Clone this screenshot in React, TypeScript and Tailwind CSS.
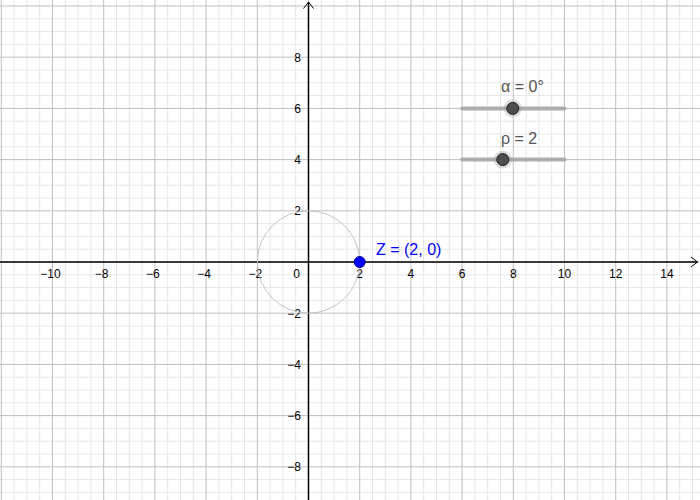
const W = 700;
const H = 500;
const OX = 308.5;
const OY = 262;
const U = 25.6;

const px = (x: number) => OX + x * U;
const py = (y: number) => OY - y * U;

const range = (a: number, b: number, s: number) => {
  const out: number[] = [];
  for (let v = a; v <= b + 1e-9; v += s) out.push(Math.round(v * 100) / 100);
  return out;
};

const xs = range(-12.5, 15.5, 0.5);
const ys = range(-10, 11, 0.5);
const fmt = (n: number) => (n < 0 ? "\u2212" + Math.abs(n) : String(n));

function Slider({ y, knob, label }: { y: number; knob: number; label: string }) {
  return (
    <g>
      <line x1={px(6)} y1={py(y)} x2={px(10)} y2={py(y)} stroke="#a8a8a8" strokeWidth={4} strokeLinecap="round" opacity={0.9} />
      <circle cx={px(knob)} cy={py(y)} r={9} fill="#9a9a9a" opacity={0.35} />
      <circle cx={px(knob)} cy={py(y)} r={6} fill="#4d4d4d" stroke="#222" strokeWidth={1} />
      <text x={501} y={py(y) - 16} fontSize={16} fill="#555555">{label}</text>
    </g>
  );
}

export default function App() {
  return (
    <div className="w-[700px] h-[500px] bg-white overflow-hidden" style={{ fontFamily: "'Liberation Sans', Arial, sans-serif" }}>
      <svg width={W} height={H} viewBox={`0 0 ${W} ${H}`} className="block">
        {/* minor grid */}
        {xs.filter((v) => v % 2 !== 0).map((v) => (
          <line key={"mx" + v} x1={px(v)} y1={0} x2={px(v)} y2={H} stroke="#e6e6e6" strokeWidth={1} />
        ))}
        {ys.filter((v) => v % 2 !== 0).map((v) => (
          <line key={"my" + v} x1={0} y1={py(v)} x2={W} y2={py(v)} stroke="#e6e6e6" strokeWidth={1} />
        ))}
        {/* major grid */}
        {xs.filter((v) => v % 2 === 0).map((v) => (
          <line key={"Mx" + v} x1={px(v)} y1={0} x2={px(v)} y2={H} stroke="#c0c0c0" strokeWidth={1} />
        ))}
        {ys.filter((v) => v % 2 === 0).map((v) => (
          <line key={"My" + v} x1={0} y1={py(v)} x2={W} y2={py(v)} stroke="#c0c0c0" strokeWidth={1} />
        ))}

        {/* axes */}
        <line x1={0} y1={OY} x2={697.5} y2={OY} stroke="#000" strokeWidth={1.5} />
        <polyline points={`691,${OY - 5} 697.5,${OY} 691,${OY + 5}`} fill="none" stroke="#000" strokeWidth={1} />
        <line x1={OX} y1={2} x2={OX} y2={H} stroke="#000" strokeWidth={1.5} />
        <polyline points={`${OX - 5},8.5 ${OX},2 ${OX + 5},8.5`} fill="none" stroke="#000" strokeWidth={1} />

        {/* x labels */}
        {range(-10, 14, 2).filter((v) => v !== 0).map((v) => (
          <text key={"lx" + v} x={px(v) + (v < 0 ? -2 : 0)} y={278} fontSize={12} textAnchor="middle" fill="#000">{fmt(v)}</text>
        ))}
        <text x={300} y={278} fontSize={12} textAnchor="end" fill="#000">0</text>
        {/* y labels */}
        {range(-8, 8, 2).filter((v) => v !== 0).map((v) => (
          <text key={"ly" + v} x={301} y={py(v) + 4.5} fontSize={12} textAnchor="end" fill="#000">{fmt(v)}</text>
        ))}

        {/* circle */}
        <circle cx={OX} cy={OY} r={2 * U} fill="none" stroke="#c4c4c4" strokeWidth={1} />

        {/* point Z */}
        <circle cx={px(2)} cy={OY} r={5.5} fill="#0000ff" stroke="#00008a" strokeWidth={1} />
        <text x={376} y={254.5} fontSize={16} fill="#0000ff">Z = (2, 0)</text>

        {/* sliders */}
        <Slider y={6} knob={7.98} label="α = 0°" />
        <Slider y={4} knob={7.59} label="ρ = 2" />
      </svg>
    </div>
  );
}
